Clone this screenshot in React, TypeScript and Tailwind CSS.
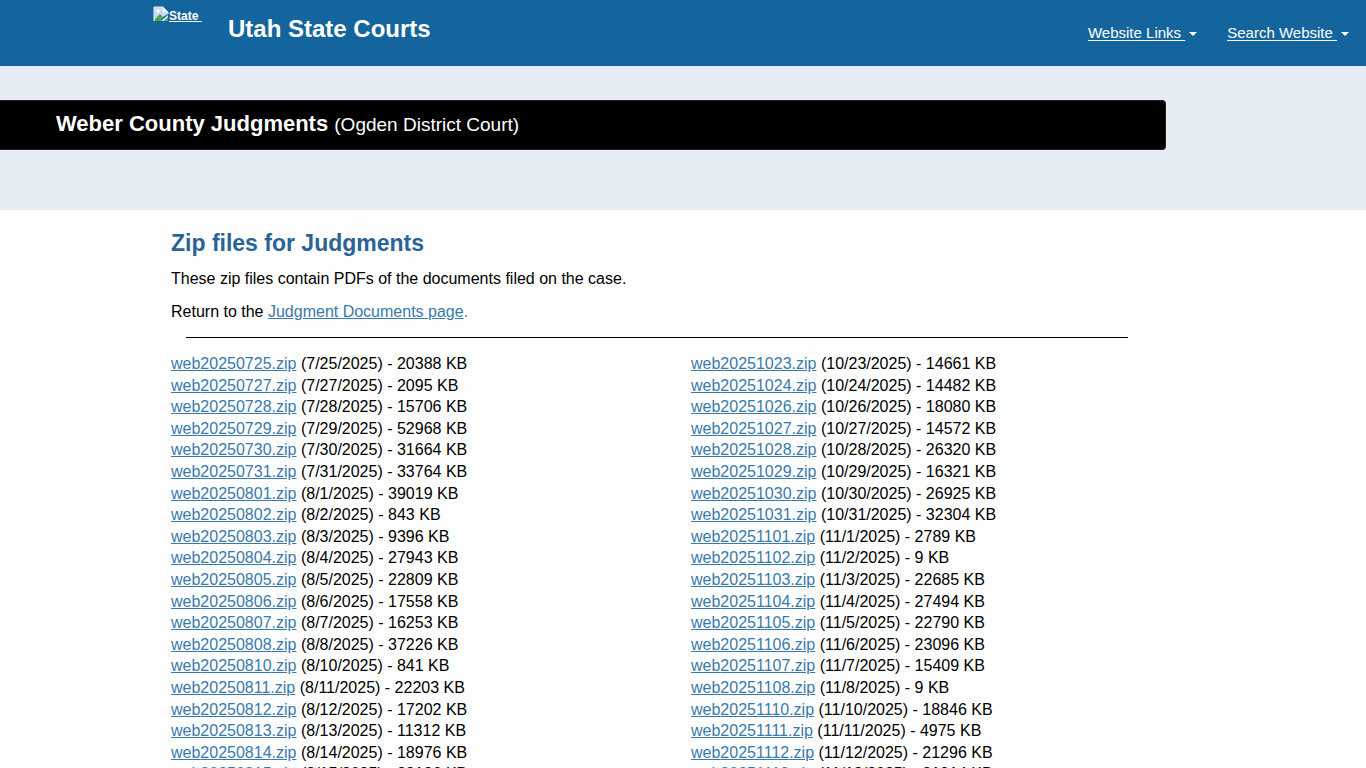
type ZipFile = { stamp: string; date: string; size: number };

const earlier: ZipFile[] = [
  { stamp: "20250725", date: "7/25/2025", size: 20388 },
  { stamp: "20250727", date: "7/27/2025", size: 2095 },
  { stamp: "20250728", date: "7/28/2025", size: 15706 },
  { stamp: "20250729", date: "7/29/2025", size: 52968 },
  { stamp: "20250730", date: "7/30/2025", size: 31664 },
  { stamp: "20250731", date: "7/31/2025", size: 33764 },
  { stamp: "20250801", date: "8/1/2025", size: 39019 },
  { stamp: "20250802", date: "8/2/2025", size: 843 },
  { stamp: "20250803", date: "8/3/2025", size: 9396 },
  { stamp: "20250804", date: "8/4/2025", size: 27943 },
  { stamp: "20250805", date: "8/5/2025", size: 22809 },
  { stamp: "20250806", date: "8/6/2025", size: 17558 },
  { stamp: "20250807", date: "8/7/2025", size: 16253 },
  { stamp: "20250808", date: "8/8/2025", size: 37226 },
  { stamp: "20250810", date: "8/10/2025", size: 841 },
  { stamp: "20250811", date: "8/11/2025", size: 22203 },
  { stamp: "20250812", date: "8/12/2025", size: 17202 },
  { stamp: "20250813", date: "8/13/2025", size: 11312 },
  { stamp: "20250814", date: "8/14/2025", size: 18976 },
  { stamp: "20250815", date: "8/15/2025", size: 28186 },
];

const later: ZipFile[] = [
  { stamp: "20251023", date: "10/23/2025", size: 14661 },
  { stamp: "20251024", date: "10/24/2025", size: 14482 },
  { stamp: "20251026", date: "10/26/2025", size: 18080 },
  { stamp: "20251027", date: "10/27/2025", size: 14572 },
  { stamp: "20251028", date: "10/28/2025", size: 26320 },
  { stamp: "20251029", date: "10/29/2025", size: 16321 },
  { stamp: "20251030", date: "10/30/2025", size: 26925 },
  { stamp: "20251031", date: "10/31/2025", size: 32304 },
  { stamp: "20251101", date: "11/1/2025", size: 2789 },
  { stamp: "20251102", date: "11/2/2025", size: 9 },
  { stamp: "20251103", date: "11/3/2025", size: 22685 },
  { stamp: "20251104", date: "11/4/2025", size: 27494 },
  { stamp: "20251105", date: "11/5/2025", size: 22790 },
  { stamp: "20251106", date: "11/6/2025", size: 23096 },
  { stamp: "20251107", date: "11/7/2025", size: 15409 },
  { stamp: "20251108", date: "11/8/2025", size: 9 },
  { stamp: "20251110", date: "11/10/2025", size: 18846 },
  { stamp: "20251111", date: "11/11/2025", size: 4975 },
  { stamp: "20251112", date: "11/12/2025", size: 21296 },
  { stamp: "20251113", date: "11/13/2025", size: 21914 },
];

function BrokenImage() {
  return (
    <svg viewBox="0 0 16 16" className="size-4 shrink-0" aria-hidden="true">
      <path d="M1 1h9l5 5v2l-5 3-3 4H1z" fill="#c6d8f5" />
      <path d="M10 1v5h5z" fill="#ffffff" />
      <path d="M1 15V1h9l5 5v2" fill="none" stroke="#e9eef5" />
      <circle cx="5" cy="5" r="1.8" fill="#ffffff" />
      <path d="M2 15v-2l5-5 3 3-3 4z" fill="#4ca64c" />
      <path d="M8 15l7-6v6z" fill="#dbe7ee" />
      <path d="M11 15l4-4v4z" fill="#4ca64c" />
    </svg>
  );
}

function MenuLink({ label }: { label: string }) {
  return (
    <a href="#" className="flex items-center gap-1 text-[15px] leading-5 text-white">
      <span className="whitespace-pre underline underline-offset-2">{label + " "}</span>
      <svg viewBox="0 0 8 4" className="mt-px h-1 w-2" aria-hidden="true">
        <path d="M0 0h8L4 4z" fill="currentColor" />
      </svg>
    </a>
  );
}

function FileList({ files }: { files: ZipFile[] }) {
  return (
    <ul className="grid min-h-[432px] flex-1 auto-rows-fr leading-[21px]">
      {files.map((f) => (
        <li key={f.stamp}>
          <a href={`#web${f.stamp}`} className="text-[#3a7aab] underline">
            web{f.stamp}.zip
          </a>{" "}
          ({f.date}) - {f.size} KB
        </li>
      ))}
    </ul>
  );
}

export default function App() {
  return (
    <div className="min-h-screen bg-[#fefefe] font-['Liberation_Sans',Arial,sans-serif] text-base text-black">
      <header className="flex h-[66px] items-start justify-between bg-[#14659e] pr-[17px] pl-[153px] text-white">
        <div className="flex items-start gap-[25px]">
          <a href="#" className="flex w-[50px] items-start pt-[6px] text-xs leading-5 font-bold">
            <BrokenImage />
            <span className="whitespace-pre underline">State </span>
          </a>
          <h1 className="pt-4 text-2xl leading-[26px] font-bold">Utah State Courts</h1>
        </div>
        <nav className="flex gap-[30px] pt-[23px]">
          <MenuLink label="Website Links" />
          <MenuLink label="Search Website" />
        </nav>
      </header>

      <section className="bg-[#e7edf4] pt-[34px] pr-[200px] pb-[60px]">
        <div className="rounded-r border border-l-0 border-[#222222] bg-black pt-[10px] pb-[11px] pl-14 text-white">
          <h2 className="text-[22px] leading-[26px] font-bold">
            Weber County Judgments <span className="text-[19px] font-normal">(Ogden District Court)</span>
          </h2>
        </div>
      </section>

      <main className="pt-5 pr-[155px] pl-[171px]">
        <h2 className="text-[23px] leading-[26px] font-bold text-[#2a6496]">Zip files for Judgments</h2>
        <p className="mt-3 leading-[22px]">These zip files contain PDFs of the documents filed on the case.</p>
        <p className="mt-[11px] leading-[22px]">
          Return to the{" "}
          <a href="#" className="text-[#3a7aab]">
            <span className="underline">Judgment Documents page</span>.
          </a>
        </p>
        <hr className="mt-[14px] mr-[83px] ml-[15px] border-black" />
        <div className="mt-[15px] flex">
          <FileList files={earlier} />
          <FileList files={later} />
        </div>
      </main>
    </div>
  );
}
